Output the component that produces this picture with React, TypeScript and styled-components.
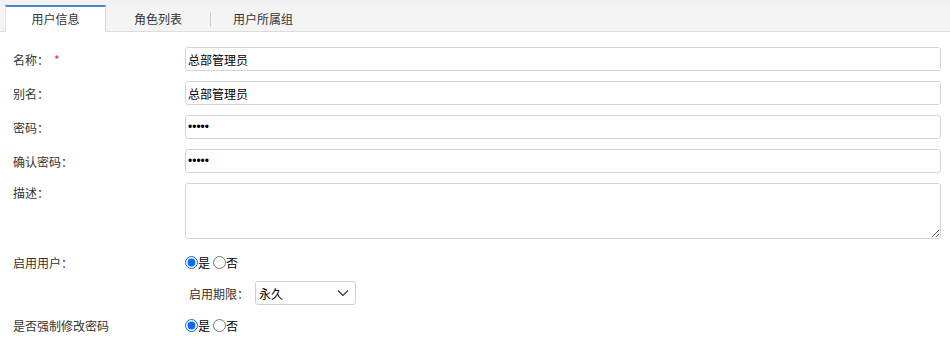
import { createGlobalStyle } from "styled-components";
import styled from "styled-components";

const GlobalStyle = createGlobalStyle`
    html, body { margin:0; padding:0; background:#fff; }
    body { font-family:"Noto Sans CJK SC","Liberation Sans",sans-serif; font-size:12px; color:#333; }
`

const TabBar = styled.div`
    display:flex; align-items:flex-end; padding-left:5px; background:#f4f4f4; border-bottom:1px solid #dcdcdc; border-top:5px solid #f2f2f2; box-sizing:border-box; height:32px;
`
const Tab = styled.div<{ $active?: boolean }>`
    position:relative; display:flex; align-items:center; justify-content:center; box-sizing:border-box;
    width:${p => p.$active ? 101 : 104}px; height:${p => p.$active ? 27 : 26}px; margin-bottom:${p => p.$active ? -1 : 0}px;
    font-size:12px; color:#333;
    background:${p => p.$active ? "#fff" : "transparent"};
    border-top:${p => p.$active ? "2px solid #4a86c8" : "2px solid transparent"};
    border-left:${p => p.$active ? "1px solid #e2e2e2" : "none"};
    border-right:${p => p.$active ? "1px solid #d6d6d6" : "none"};
    padding-bottom:2px;
`
const TabSep = styled.div`
    width:1px; height:15px; background:#d0d0d0; align-self:center; margin-top:2px;
`
const Form = styled.div`
    padding:15px 9px 0 13px;
`
const Row = styled.div<{ $mb?: number; $top?: boolean }>`
    display:flex; align-items:${p => p.$top ? "flex-start" : "center"}; margin-bottom:${p => p.$mb ?? 10}px; min-height:24px;
`
const Label = styled.div<{ $top?: boolean }>`
    width:172px; flex-shrink:0; color:#333; font-size:12px; padding-top:${p => p.$top ? 1 : 0}px;
`
const Required = styled.span`
    color:#e4393c; margin-left:5px; font-size:12px;
`
const TextInput = styled.input`
    flex:1; height:24px; box-sizing:border-box; border:1px solid #d4d4d4; border-radius:3px; padding:0 2px;
    font-family:"Noto Sans CJK SC","Liberation Sans",sans-serif; font-size:12px; color:#000; outline:none;
    &[type=password] { font-family:"Liberation Sans",sans-serif; font-size:12px; letter-spacing:0; }
`
const TextArea = styled.textarea`
    flex:1; height:56px; box-sizing:border-box; border:1px solid #d4d4d4; border-radius:3px; padding:2px; margin:0;
    font-family:"Noto Sans CJK SC","Liberation Sans",sans-serif; font-size:12px; resize:both; outline:none;
`
const RadioGroup = styled.div`
    display:flex; align-items:center; color:#000; font-size:12px;
`
const RadioItem = styled.label`
    display:flex; align-items:center; margin-right:3px;
`
const Radio = styled.input`
    width:13px; height:13px; margin:0; accent-color:#0a6cf5;
`
const SubLabel = styled.div`
    margin-left:176px; width:66px; color:#333; font-size:12px;
`
const SelectBox = styled.div`
    display:flex; align-items:center; justify-content:space-between; width:101px; height:24px; box-sizing:border-box;
    border:1px solid #d0d0d0; border-radius:3px; padding:0 6px 0 3px; color:#000; font-size:12px; background:#fff;
`

const Chevron = () => (
    <svg width="12" height="8" viewBox="0 0 12 8">
        <path d="M1 1.5 L6 6.5 L11 1.5" fill="none" stroke="#333" strokeWidth="1.2" />
    </svg>
)

const YesNo = ({ name }: { name: string }) => (
    <RadioGroup>
        <RadioItem><Radio type="radio" name={name} defaultChecked />是</RadioItem>
        <RadioItem><Radio type="radio" name={name} />否</RadioItem>
    </RadioGroup>
)

const App = () => {
    return (
        <>
            <GlobalStyle />
            <TabBar>
                <Tab $active>用户信息</Tab>
                <Tab>角色列表</Tab>
                <TabSep />
                <Tab>用户所属组</Tab>
            </TabBar>
            <Form>
                <Row>
                    <Label>名称：<Required>*</Required></Label>
                    <TextInput defaultValue="总部管理员" />
                </Row>
                <Row>
                    <Label>别名：</Label>
                    <TextInput defaultValue="总部管理员" />
                </Row>
                <Row>
                    <Label>密码：</Label>
                    <TextInput type="password" defaultValue="12345" />
                </Row>
                <Row>
                    <Label>确认密码：</Label>
                    <TextInput type="password" defaultValue="12345" />
                </Row>
                <Row $top $mb={11}>
                    <Label $top>描述：</Label>
                    <TextArea />
                </Row>
                <Row $mb={7}>
                    <Label>启用用户：</Label>
                    <YesNo name="enable" />
                </Row>
                <Row $mb={8}>
                    <SubLabel>启用期限：</SubLabel>
                    <SelectBox>永久<Chevron /></SelectBox>
                </Row>
                <Row>
                    <Label>是否强制修改密码</Label>
                    <YesNo name="force" />
                </Row>
            </Form>
        </>
    )
}
export default App;
